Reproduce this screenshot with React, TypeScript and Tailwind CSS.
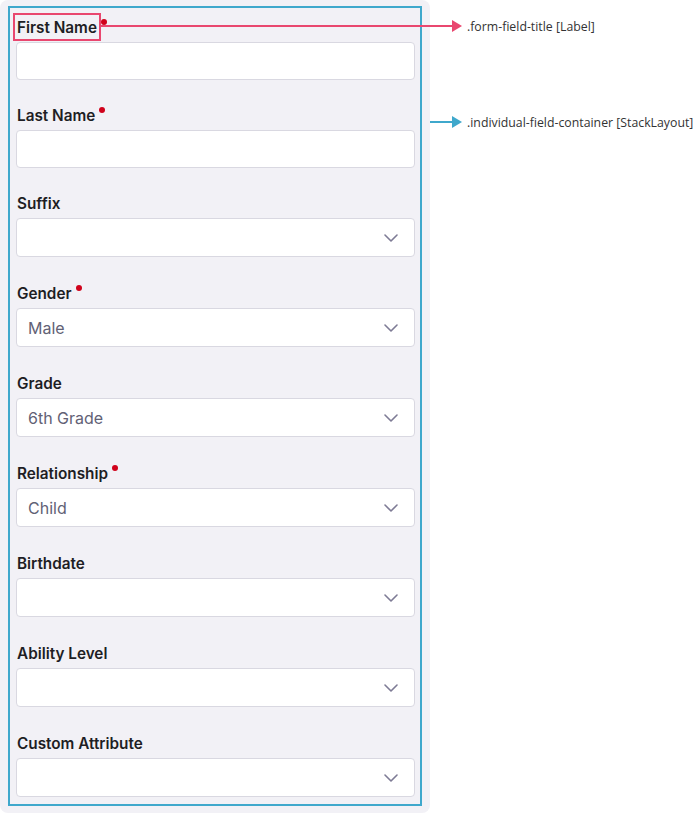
import React from 'react';

type Field = {
    label: string;
    kind: 'text' | 'select';
    value?: string;
    required?: boolean;
};

const fields: Field[] = [
    { label: 'First Name', kind: 'text', required: true },
    { label: 'Last Name', kind: 'text', required: true },
    { label: 'Suffix', kind: 'select' },
    { label: 'Gender', kind: 'select', value: 'Male', required: true },
    { label: 'Grade', kind: 'select', value: '6th Grade' },
    { label: 'Relationship', kind: 'select', value: 'Child', required: true },
    { label: 'Birthdate', kind: 'select' },
    { label: 'Ability Level', kind: 'select' },
    { label: 'Custom Attribute', kind: 'select' },
];

const Chevron: React.FC = () => (
    <svg width="14" height="8" viewBox="0 0 14 8" fill="none" className="shrink-0">
        <path d="M1 1l6 6 6-6" stroke="#7e7b95" strokeWidth="1.6" strokeLinecap="round" strokeLinejoin="round" />
    </svg>
);

const FormField: React.FC<{ field: Field; last: boolean }> = ({ field, last }) => {
    const spacing = last ? '' : field.kind === 'text' ? 'mb-[23px]' : 'mb-[24px]';
    return (
        <div className={`flex flex-col ${spacing}`}>
            <div className="flex h-[24px] items-center px-[1px] mb-[3px]">
                <span className="relative mt-[2px] text-[15.3px] font-semibold leading-[24px] text-[#1e1e24]">
                    {field.label}
                    {field.required && (
                        <span className="absolute -right-[10px] top-[3px] h-[6px] w-[6px] rounded-full bg-[#d0021b]" />
                    )}
                </span>
            </div>
            {field.kind === 'text' ? (
                <div className="h-[38px] rounded-[4px] border border-[#d9d8e1] bg-white" />
            ) : (
                <div className="flex h-[39px] items-center justify-between rounded-[4px] border border-[#d9d8e1] bg-white pl-[11px] pr-[16px]">
                    <span className="text-[16px] text-[#626175]">{field.value ?? ''}</span>
                    <Chevron />
                </div>
            )}
        </div>
    );
};

const Arrow: React.FC<{ color: string }> = ({ color }) => (
    <svg width="10" height="12" viewBox="0 0 10 12" className="shrink-0 -ml-[2px]">
        <path d="M0 0L10 6L0 12Z" fill={color} />
    </svg>
);

const App: React.FC = () => {
    return (
        <div className="relative h-[814px] w-[694px] bg-white" style={{ fontFamily: 'Inter, "Noto Sans", sans-serif' }}>
            {/* form panel */}
            <div className="h-[813px] w-[430px] rounded-lg bg-[#f2f1f6] pl-[8px] pt-[6px]">
                <div className="w-[414px] border-2 border-[#3fa8cc] pb-[7px] pl-[6px] pr-[5px] pt-[7px]">
                    {fields.map((f, i) => (
                        <FormField key={f.label} field={f} last={i === fields.length - 1} />
                    ))}
                </div>
            </div>

            {/* annotation: label */}
            <div className="absolute left-[13px] top-[13px] h-[28px] w-[88px] border-2 border-[#e9476f]" />
            <div
                className="absolute left-[101px] top-[18px] flex items-center text-[12.3px] leading-[12px] text-[#333]"
                style={{ fontFamily: '"Open Sans", sans-serif' }}
            >
                <div className="h-[2px] w-[353px] bg-[#e9476f]" />
                <Arrow color="#e9476f" />
                <span className="ml-[5px] pt-[3px] whitespace-nowrap">.form-field-title [Label]</span>
            </div>

            {/* annotation: container */}
            <div
                className="absolute left-[430px] top-[114px] flex items-center text-[12.3px] leading-[12px] text-[#333]"
                style={{ fontFamily: '"Open Sans", sans-serif' }}
            >
                <div className="h-[2px] w-[24px] bg-[#3fa8cc]" />
                <Arrow color="#3fa8cc" />
                <span className="ml-[5px] pt-[3px] whitespace-nowrap">.individual-field-container [StackLayout]</span>
            </div>
        </div>
    );
};

export default App;
